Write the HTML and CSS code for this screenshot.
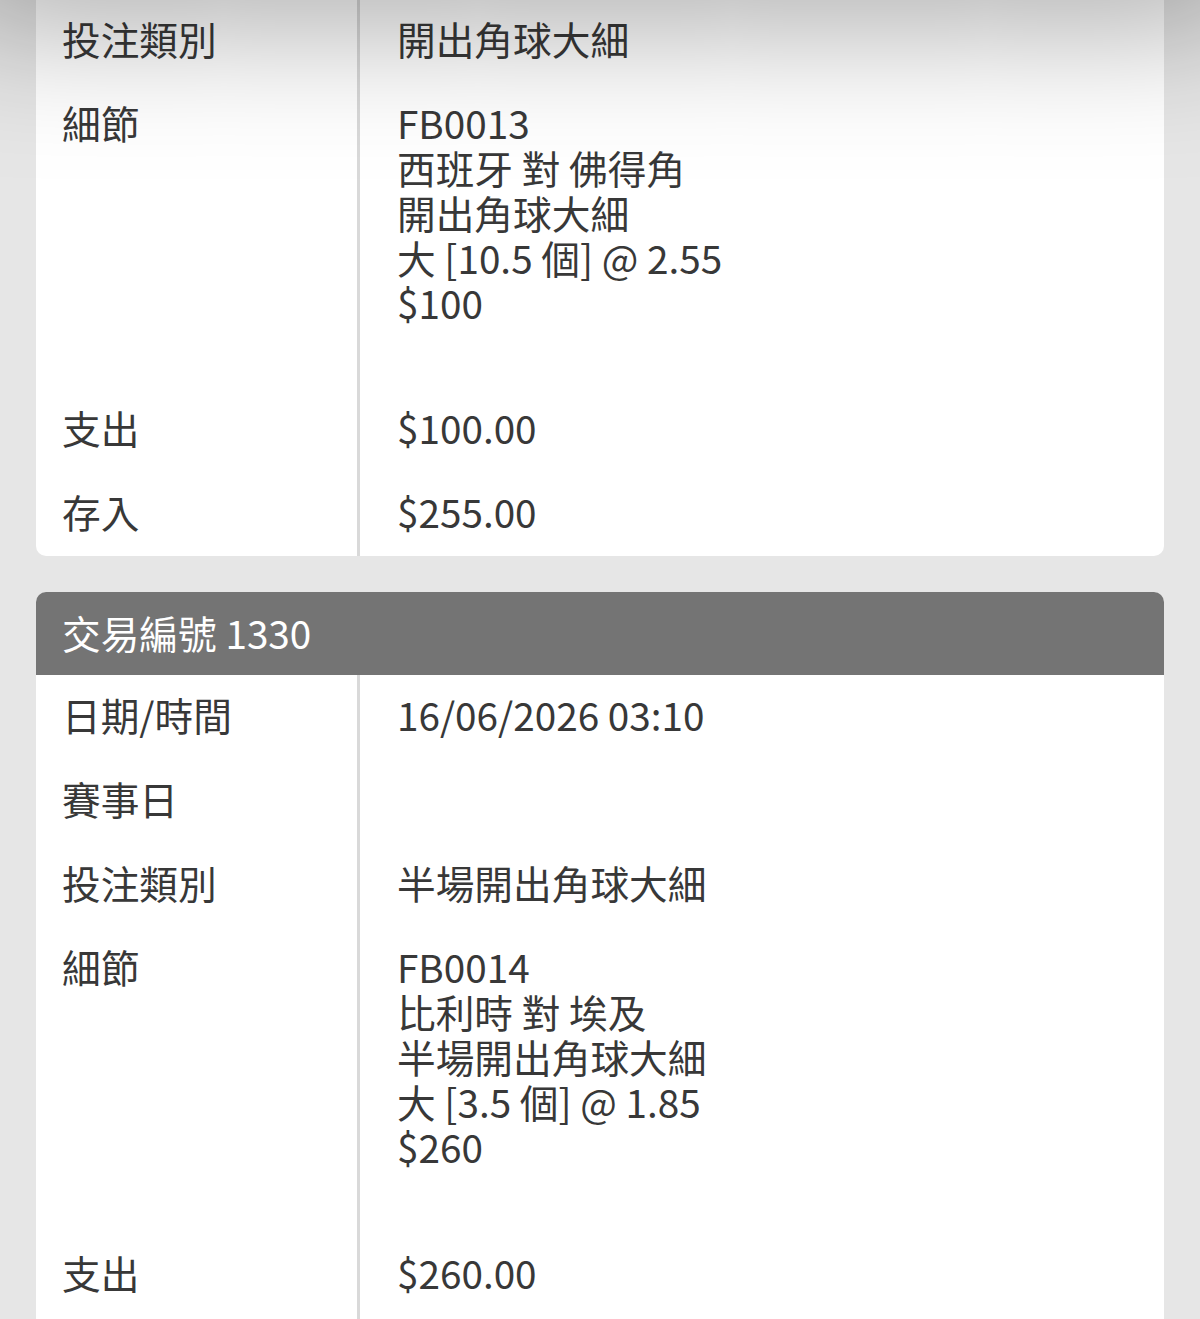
FILE: index.html
```html
<!DOCTYPE html>
<html lang="zh-Hant">
<head>
  <meta charset="UTF-8">
  <meta name="viewport" content="width=device-width, initial-scale=1.0">
  <title>交易紀錄</title>
  <link rel="stylesheet" href="styles.css">
</head>
<body>
  <div class="top-shadow"></div>
  <div class="records">
    <div class="record record-cut">
      <div class="row">
        <div class="label">投注類別</div>
        <div class="value">開出角球大細</div>
      </div>
      <div class="row">
        <div class="label">細節</div>
        <div class="value details">FB0013<br>西班牙 對 佛得角<br>開出角球大細<br>大 [10.5 個] @ 2.55<br>$100</div>
      </div>
      <div class="row">
        <div class="label">支出</div>
        <div class="value">$100.00</div>
      </div>
      <div class="row">
        <div class="label">存入</div>
        <div class="value">$255.00</div>
      </div>
    </div>

    <div class="record">
      <div class="record-head">交易編號 1330</div>
      <div class="row">
        <div class="label">日期/時間</div>
        <div class="value">16/06/2026 03:10</div>
      </div>
      <div class="row">
        <div class="label">賽事日</div>
        <div class="value"></div>
      </div>
      <div class="row">
        <div class="label">投注類別</div>
        <div class="value">半場開出角球大細</div>
      </div>
      <div class="row">
        <div class="label">細節</div>
        <div class="value details">FB0014<br>比利時 對 埃及<br>半場開出角球大細<br>大 [3.5 個] @ 1.85<br>$260</div>
      </div>
      <div class="row">
        <div class="label">支出</div>
        <div class="value">$260.00</div>
      </div>
      <div class="row">
        <div class="label">存入</div>
        <div class="value">$0.00</div>
      </div>
    </div>
  </div>
</body>
</html>
```

FILE: styles.css
```css
body {
  margin: 0;
  background: #e6e6e6;
  font-family: "Noto Sans CJK TC", "Noto Sans", sans-serif;
  font-size: 38.7px;
  line-height: 45px;
  color: #383838;
  overflow: hidden;
}

/* shadow of the fixed bar just above the visible area */
.top-shadow {
  position: fixed;
  left: -60px;
  right: -60px;
  top: -100px;
  height: 100px;
  background: #fff;
  box-shadow: 0 0 150px 0 rgba(0, 0, 0, 0.5);
  z-index: 5;
}

.records {
  padding: 0 36px;
  display: flex;
  flex-direction: column;
  gap: 36px;
}

.record {
  background: #fff;
  border-radius: 10px;
  overflow: hidden;
}

.record-cut {
  margin-top: -2px;
  border-top-left-radius: 0;
  border-top-right-radius: 0;
}

.record-head {
  background: #747474;
  color: #fff;
  padding: 18px 26px 20px;
  height: 45px;
}

.row {
  display: grid;
  grid-template-columns: 321px 1fr;
}

.label {
  padding: 17.5px 0 21.5px 26px;
}

.value {
  border-left: 3px solid #d9d9d9;
  padding: 17.5px 0 21.5px 37px;
  min-height: 45px;
}

.value.details {
  padding-bottom: 63px;
}
```
